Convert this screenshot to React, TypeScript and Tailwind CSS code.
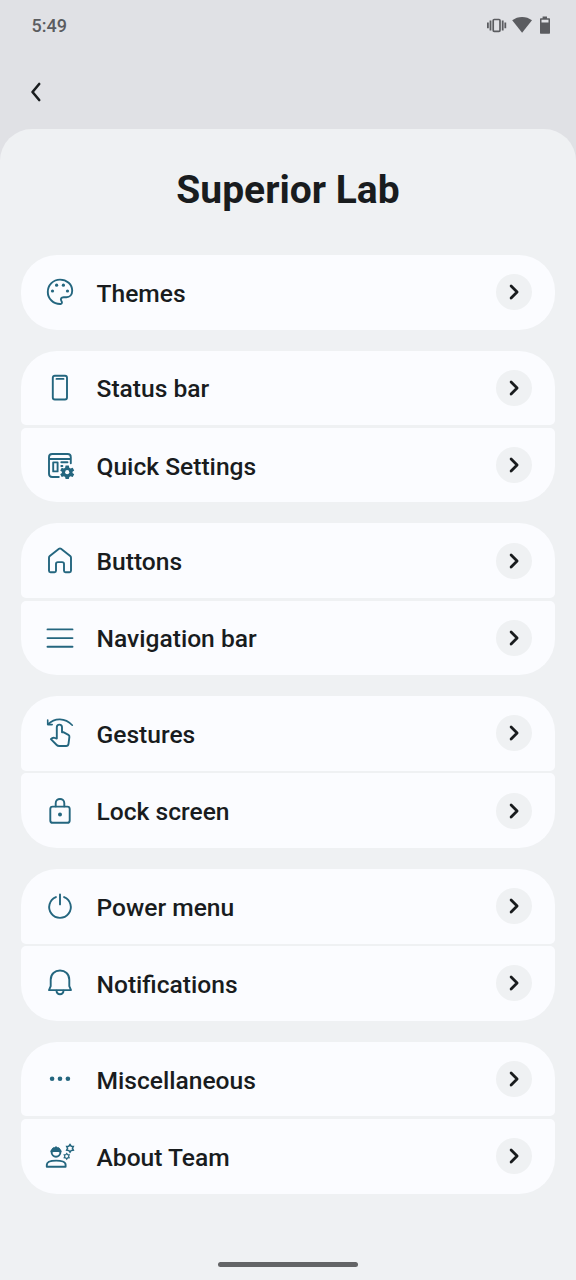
import type { ReactNode } from "react";

type Item = {
  label: string;
  icon: ReactNode;
};

const Icon = ({ children }: { children: ReactNode }) => (
  <svg
    viewBox="0 0 28 28"
    className="size-7 shrink-0 overflow-visible text-[#24667f]"
    fill="none"
    stroke="currentColor"
    strokeWidth="1.9"
    strokeLinecap="round"
    strokeLinejoin="round"
  >
    {children}
  </svg>
);

const Gear = ({ x, y, scale }: { x: number; y: number; scale: number }) => (
  <g transform={`translate(${x} ${y}) scale(${scale})`}>
    <path
      d="M-1.6 -6.6H1.6L2.1 -4.4L3.3 -3.7L5.5 -4.5L7 -1.8L5.3 -.5V.8L7 2.1L5.5 4.8L3.3 4L2.1 4.7L1.6 6.7H-1.6L-2.1 4.7L-3.3 4L-5.5 4.8L-7 2.1L-5.3 .8V-.5L-7 -1.8L-5.5 -4.5L-3.3 -3.7L-2.1 -4.4Z"
      fill="currentColor"
      stroke="none"
    />
    <circle r="2.1" fill="#fbfcff" stroke="none" />
  </g>
);

const SmallGear = ({ x, y, scale }: { x: number; y: number; scale: number }) => (
  <path
    transform={`translate(${x} ${y}) scale(${scale})`}
    d="M0 -4L1.3 -2.2L3.5 -2L2.6 0L3.5 2L1.3 2.2L0 4L-1.3 2.2L-3.5 2L-2.6 0L-3.5 -2L-1.3 -2.2Z"
    strokeWidth="1.6"
    strokeLinejoin="miter"
  />
);

const groups: Item[][] = [
  [
    {
      label: "Themes",
      icon: (
        <Icon>
          <path d="M14.6 26C7.2 26.2 1.8 20.6 1.8 14C1.8 7 7.3 1.6 14 1.6C20.8 1.6 26.2 6.4 26.2 12.7C26.2 16.6 23.8 19.2 20.4 19.2H17.6C15.2 19.2 14.3 21 15.3 22.8C16.3 24.4 16.2 25.8 14.6 26Z" />
          <g fill="currentColor" stroke="none">
            <circle cx="6.5" cy="13" r="1.6" />
            <circle cx="10.6" cy="7.2" r="1.6" />
            <circle cx="17.4" cy="7.2" r="1.6" />
            <circle cx="21.5" cy="13" r="1.6" />
          </g>
        </Icon>
      ),
    },
  ],
  [
    {
      label: "Status bar",
      icon: (
        <Icon>
          <rect x="6.8" y="1.7" width="14.2" height="23.8" rx="2" />
          <path d="M10.5 4.9H17.5" />
        </Icon>
      ),
    },
    {
      label: "Quick Settings",
      icon: (
        <Icon>
          <path d="M12.8 26H6.2C4 26 3 25 3 22.8V6.2C3 4 4 3 6.2 3H21.6C23.8 3 24.8 4 24.8 6.2V12.3M3 8H24.8" />
          <rect x="7.2" y="11.4" width="4.4" height="9" />
          <path d="M15.3 11.2H21.5M15.3 15H16.4" />
          <Gear x={21.2} y={21.2} scale={1} />
        </Icon>
      ),
    },
  ],
  [
    {
      label: "Buttons",
      icon: (
        <Icon>
          <path d="M3 10.7C3 10 3.2 9.6 3.8 9.1L13 1.8C13.7 1.3 14.3 1.3 15 1.8L24.2 9.1C24.8 9.6 25 10 25 10.7V23.8C25 24.8 24.5 25.3 23.5 25.3H19.5C18.5 25.3 18 24.8 18 23.8V17C18 15.7 17.4 15.1 16.1 15.1H11.9C10.6 15.1 10 15.7 10 17V23.8C10 24.8 9.5 25.3 8.5 25.3H4.5C3.5 25.3 3 24.8 3 23.8Z" />
        </Icon>
      ),
    },
    {
      label: "Navigation bar",
      icon: (
        <Icon>
          <path d="M1.5 5.4H26.5M1.5 14.1H26.5M1.5 22.8H26.5" />
        </Icon>
      ),
    },
  ],
  [
    {
      label: "Gestures",
      icon: (
        <Icon>
          <path d="M1.7 1V5.6H6.2M1.9 5.4C8.8 -1.5 19 -1.4 26.3 6.2" strokeWidth="1.6" />
          <path d="M10.8 19.5V8.2C10.8 4.8 16 4.8 16 8.2V13.2H17.3L22.4 15.8C23.3 16.3 23.5 16.8 23.4 17.8L22.5 24.8C22.3 26.3 21.6 27 20.1 27H13.2C12.1 27 11.4 26.7 10.7 26L4.9 20.2C6.2 18.7 7.2 18.4 8.6 18.9Z" />
        </Icon>
      ),
    },
    {
      label: "Lock screen",
      icon: (
        <Icon>
          <rect x="4.3" y="9.6" width="19.4" height="16.2" rx="2.4" />
          <path d="M9.7 9.4V6.2C9.7 .6 18.3 .6 18.3 6.2V9.4" />
          <circle cx="14" cy="17.6" r="2" fill="currentColor" stroke="none" />
        </Icon>
      ),
    },
  ],
  [
    {
      label: "Power menu",
      icon: (
        <Icon>
          <path d="M9.9 5.1A10.8 10.8 0 1 0 18.1 5.1" />
          <path d="M14 2.4V12.4" />
        </Icon>
      ),
    },
    {
      label: "Notifications",
      icon: (
        <Icon>
          <path d="M3 21.1H25L23.3 17.2V10.8C23.3 5 19.2 1.5 14 1.5S4.7 5 4.7 10.8V17.2Z" />
          <path d="M10.5 21.6C10.8 26.4 17.2 26.4 17.5 21.6" />
        </Icon>
      ),
    },
  ],
  [
    {
      label: "Miscellaneous",
      icon: (
        <Icon>
          <g fill="currentColor" stroke="none">
            <circle cx="6.1" cy="13.7" r="2.3" />
            <circle cx="14" cy="13.7" r="2.3" />
            <circle cx="21.9" cy="13.7" r="2.3" />
          </g>
        </Icon>
      ),
    },
    {
      label: "About Team",
      icon: (
        <Icon>
          <path d="M.8 24.8V22.8C.8 20 5 18.6 10.2 18.6S19.6 20 19.6 22.8V24.8Z" />
          <circle cx="10" cy="10.3" r="4.4" />
          <path
            d="M4.4 9.7V8.4H5.2C5.6 6.4 6.8 5.3 8.2 4.9L8.6 6.6L9.1 4.5H10.9L11.4 6.6L11.8 4.9C13.2 5.3 14.4 6.4 14.8 8.4H15.6V9.7L14.4 10.4C11.5 9.8 8.5 9.8 5.6 10.4Z"
            fill="currentColor"
            stroke="none"
          />
          <SmallGear x={24} y={6.3} scale={0.95} />
          <SmallGear x={20.7} y={14.3} scale={0.72} />
        </Icon>
      ),
    },
  ],
];

const StatusBar = () => (
  <div className="flex h-[51px] items-center justify-between pl-[31.5px] pr-[25px] text-[#5b5c60]">
    <span className="text-[18px] font-medium">5:49</span>
    <svg viewBox="0 0 66 20" className="mb-0.5 h-5 w-[66px]" fill="currentColor">
      <rect x="8.2" y="4.5" width="6.8" height="11.8" rx="1" fill="none" stroke="currentColor" strokeWidth="1.7" />
      <path d="M4.6 5.4H6.4V15.4H4.6ZM16.8 5.4H18.6V15.4H16.8ZM2 7.6H3.8V13.2H2ZM19.4 7.6H21.2V13.2H19.4Z" />
      <path d="M27.2 5.3C32.8 .8 41.4 .8 47 5.3L37.1 17.8Z" />
      <path
        fillRule="evenodd"
        d="M57.6 1.6H62V3.2H64C64.7 3.2 65 3.6 65 4.2V17.7C65 18.4 64.7 18.8 64 18.8H56C55.3 18.8 55 18.4 55 17.7V4.2C55 3.6 55.3 3.2 56 3.2H57.6ZM56.5 4.8V7.4H63.5V4.8Z"
      />
    </svg>
  </div>
);

const Row = ({ label, icon }: Item) => (
  <button className="flex h-[74.6px] w-full items-center rounded-[5px] bg-[#fbfcff] pl-[25px] pr-[23.5px] text-left first:rounded-t-[36px] last:rounded-b-[36px]">
    {icon}
    <span className="ml-[22.5px] flex-1 pt-[3px] text-[24.6px] leading-7 font-medium text-[#191c1e]">{label}</span>
    <span className="flex size-9 items-center justify-center rounded-full bg-[#eff1f3]">
      <svg viewBox="0 0 36 36" className="size-9" fill="none" stroke="#191c1e" strokeWidth="2.8" strokeLinecap="round" strokeLinejoin="round">
        <path d="M15.1 12.1L21.1 18L15.1 23.9" />
      </svg>
    </span>
  </button>
);

const App = () => {
  return (
    <div className="flex h-[1280px] w-full flex-col overflow-hidden bg-[#e0e1e5] font-[Roboto,sans-serif]">
      <StatusBar />
      <div className="h-[77.5px] pt-7 pl-6">
        <svg viewBox="0 0 24 24" className="size-6" fill="none" stroke="#191c1e" strokeWidth="2.6" strokeLinecap="round" strokeLinejoin="round">
          <path d="M15.2 5L8.5 13L15.2 21" />
        </svg>
      </div>
      <main className="flex flex-1 flex-col rounded-t-[32px] bg-[#eff1f3] px-[21px]">
        <h1 className="pt-[38px] text-center text-[39px] leading-[46px] font-bold text-[#191c1e]">Superior Lab</h1>
        <div className="mt-[42.5px] flex flex-col gap-[21px]">
          {groups.map((items, i) => (
            <section key={i} className="flex flex-col gap-[2.6px]">
              {items.map((item) => (
                <Row key={item.label} {...item} />
              ))}
            </section>
          ))}
        </div>
        <div className="mt-auto mb-[13px] h-[5px] w-[140px] self-center rounded-full bg-[#636466]" />
      </main>
    </div>
  );
};

export default App;
